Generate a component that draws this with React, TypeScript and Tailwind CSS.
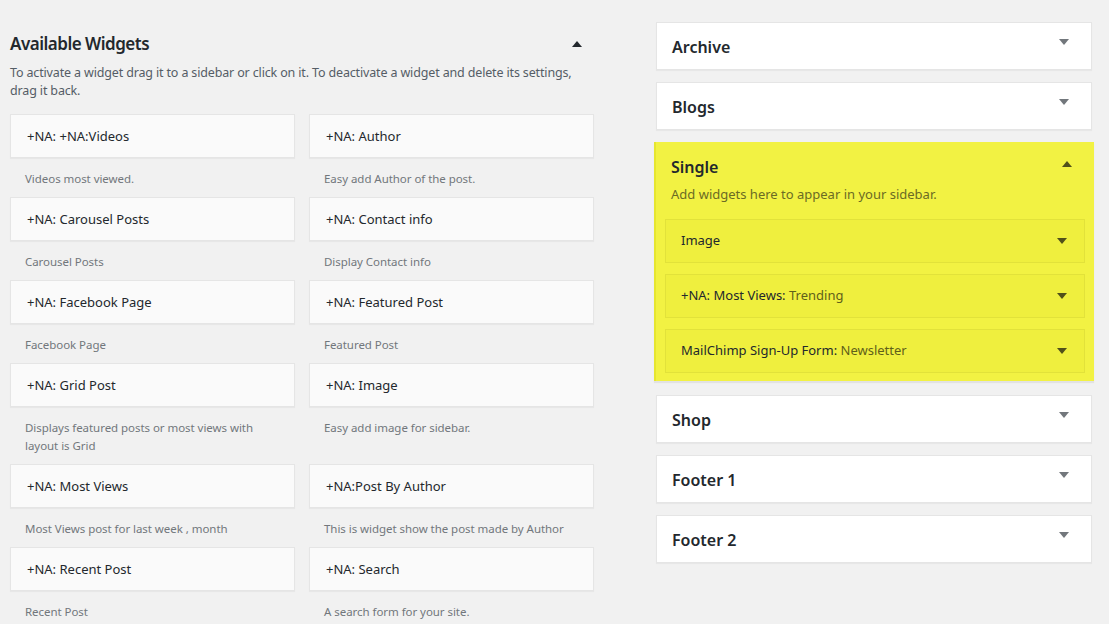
import React from "react";

const widgets = [
  ["+NA: +NA:Videos", "Videos most viewed.", "+NA: Author", "Easy add Author of the post."],
  ["+NA: Carousel Posts", "Carousel Posts", "+NA: Contact info", "Display Contact info"],
  ["+NA: Facebook Page", "Facebook Page", "+NA: Featured Post", "Featured Post"],
  ["+NA: Grid Post", "Displays featured posts or most views with layout is Grid", "+NA: Image", "Easy add image for sidebar."],
  ["+NA: Most Views", "Most Views post for last week , month", "+NA:Post By Author", "This is widget show the post made by Author"],
  ["+NA: Recent Post", "Recent Post", "+NA: Search", "A search form for your site."],
];

const Down = ({ className = "" }: { className?: string }) => (
  <svg width="10" height="6" viewBox="0 0 10 6" className={className}>
    <path d="M0 0 L10 0 L5 6 Z" fill="currentColor" />
  </svg>
);

const Up = ({ className = "" }: { className?: string }) => (
  <svg width="10" height="6" viewBox="0 0 10 6" className={className}>
    <path d="M0 6 L10 6 L5 0 Z" fill="currentColor" />
  </svg>
);

const Widget = ({ title, desc }: { title: string; desc: string }) => (
  <div className="w-[285px]">
    <div className="h-[44px] bg-[#fafafa] border border-[#e5e5e5] shadow-[0_1px_1px_rgba(0,0,0,0.04)] flex items-center pl-4 pt-[2px] text-[13px] text-[#23282d]">
      {title}
    </div>
    <p className="pl-[15px] pr-[30px] pt-[12px] text-[11.5px] leading-[18px] tracking-[-0.05px] text-[#72777c]">{desc}</p>
  </div>
);

const Sidebar = ({ name }: { name: string }) => (
  <div className="h-[48px] bg-white border border-[#e5e5e5] shadow-[0_1px_1px_rgba(0,0,0,0.04)] flex items-center justify-between pl-[15px] pr-[22px]">
    <span className="text-[16px] font-semibold text-[#23282d] mt-[2px]">{name}</span>
    <Down className="text-[#72777c] -mt-[8px]" />
  </div>
);

const Inner = ({ name, sub }: { name: string; sub?: string }) => (
  <div className="h-[44px] border border-[#e2e23a] bg-[#efef3e] flex items-center justify-between pl-[15px] pr-[17px] text-[13px] text-[#23282d]">
    <span>
      {name}
      {sub && <span className="text-[#5f5f1a]"> {sub}</span>}
    </span>
    <Down className="text-[#50501a]" />
  </div>
);

export default function App() {
  return (
    <div className="w-[1109px] h-[624px] overflow-hidden bg-[#f1f1f1] flex font-['Noto_Sans',sans-serif]">
      <div className="w-[584px] ml-[10px] pt-[31px]">
        <div className="flex items-center justify-between pr-[12px]">
          <h2 className="text-[17px] font-semibold tracking-[-0.5px] text-[#23282d]">Available Widgets</h2>
          <Up className="text-[#23282d]" />
        </div>
        <p className="mt-[7px] text-[12.5px] leading-[18px] tracking-[-0.15px] text-[#555d66]">
          To activate a widget drag it to a sidebar or click on it. To deactivate a widget and delete its settings, drag it back.
        </p>
        <div className="mt-[14px] flex flex-col">
          {widgets.map((r, i) => (
            <div key={i} className={`flex justify-between ${i === 3 ? "h-[101px]" : "h-[83px]"}`}>
              <Widget title={r[0]} desc={r[1]} />
              <Widget title={r[2]} desc={r[3]} />
            </div>
          ))}
        </div>
      </div>
      <div className="ml-[62px] w-[436px] pt-[22px] flex flex-col gap-[12px]">
        <Sidebar name="Archive" />
        <Sidebar name="Blogs" />
        <div className="-mx-[2px] bg-[#f2f243] border-l-2 border-[#e6e62f] shadow-[0_2px_1px_rgba(0,0,0,0.06)] pb-[8px] pl-[9px] pr-[9px]">
          <div className="flex items-center justify-between pl-[6px] pr-[13px] pt-[13px]">
            <span className="text-[16px] font-semibold text-[#23282d]">Single</span>
            <Up className="text-[#50501a] -mt-[6px]" />
          </div>
          <p className="pl-[6px] mt-[6px] text-[13px] text-[#6b6b24]">Add widgets here to appear in your sidebar.</p>
          <div className="mt-[14px] flex flex-col gap-[11px]">
            <Inner name="Image" />
            <Inner name="+NA: Most Views:" sub="Trending" />
            <Inner name="MailChimp Sign-Up Form:" sub="Newsletter" />
          </div>
        </div>
        <div className="mt-[2px] flex flex-col gap-[12px]">
          <Sidebar name="Shop" />
          <Sidebar name="Footer 1" />
          <Sidebar name="Footer 2" />
        </div>
      </div>
    </div>
  );
}
